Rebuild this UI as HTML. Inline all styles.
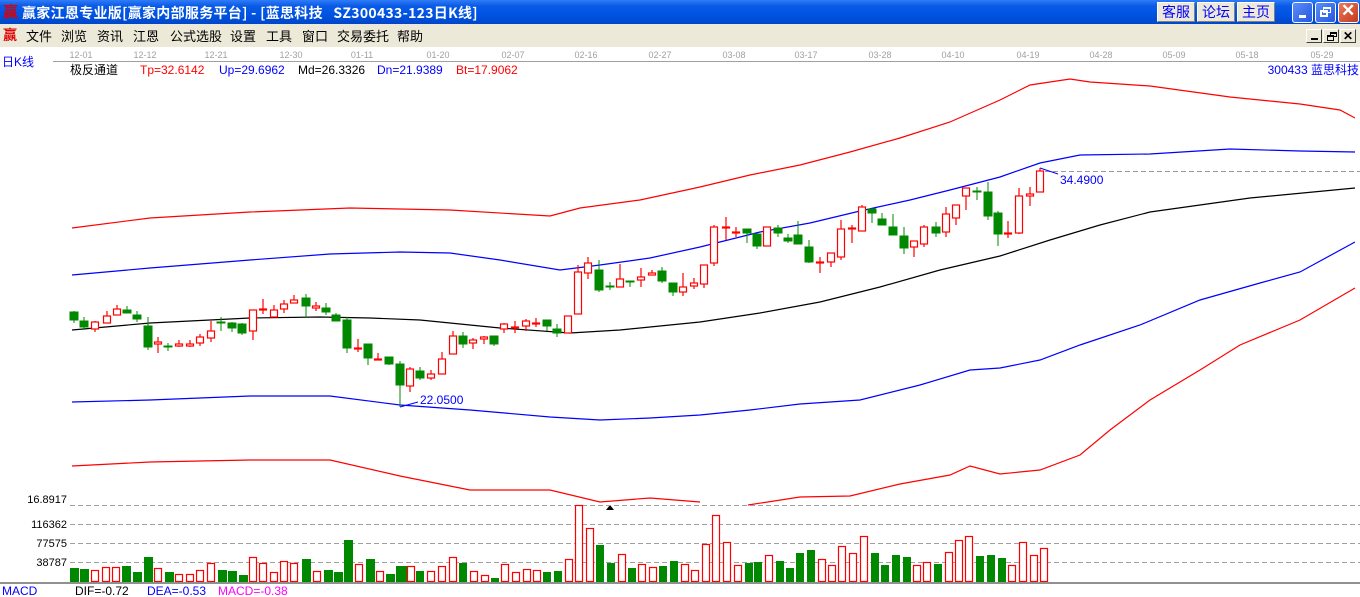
<!DOCTYPE html>
<html><head><meta charset="utf-8"><style>
*{margin:0;padding:0}
body{width:1360px;height:597px;overflow:hidden;background:#fff;font-family:"Liberation Sans","Noto Sans CJK SC",sans-serif;position:relative}
#tb{position:absolute;left:0;top:0;width:1360px;height:24px;background:linear-gradient(#2f7df7 0%,#0a5ae6 25%,#0054e3 60%,#0046c8 100%)}
#tt{position:absolute;left:22px;top:3px;color:#fff;font:bold 14px "Noto Sans CJK SC",sans-serif;letter-spacing:0.3px;white-space:pre}
.ico{position:absolute;color:#d00;font:bold 15px "Noto Sans CJK SC",sans-serif}
.tbtn{position:absolute;top:2px;height:20px;background:#ece9d8;border:1px solid #fff;border-right-color:#808080;border-bottom-color:#808080;color:#00f;font:14px "Noto Sans CJK SC",sans-serif;text-align:center;line-height:19px;box-sizing:border-box}
.wc{position:absolute;top:2px;width:21px;height:21px;border:1px solid #fff;border-radius:3px;box-sizing:border-box;background:linear-gradient(135deg,#5c8ef9,#2457e0)}
#mb{position:absolute;left:0;top:24px;width:1360px;height:23px;background:#ece9d8}
.mi{position:absolute;top:27px;font:13px "Noto Sans CJK SC",sans-serif;color:#000;line-height:17px}
.md{position:absolute;top:29px;width:16px;height:14px;background:#ece9d8;border:1px solid #fff;border-right-color:#404040;border-bottom-color:#404040;box-sizing:border-box}
svg{position:absolute;left:0;top:0}
</style></head><body>
<div id="tb"></div>
<div class="ico" style="left:3px;top:1px">赢</div>
<div id="tt">赢家江恩专业版[赢家内部服务平台] - [蓝思科技   SZ300433-123日K线]</div>
<div class="tbtn" style="left:1157px;width:38px">客服</div>
<div class="tbtn" style="left:1197px;width:38px">论坛</div>
<div class="tbtn" style="left:1237px;width:38px">主页</div>
<div class="wc" style="left:1292px"><div style="position:absolute;left:6px;top:12px;width:7px;height:3px;background:#fff"></div></div>
<div class="wc" style="left:1315px"><div style="position:absolute;left:4px;top:7px;width:8px;height:7px;border:2px solid #fff;border-top-width:2px;box-sizing:border-box"></div><div style="position:absolute;left:7px;top:4px;width:8px;height:6px;border:1px solid #fff;border-top-width:2px;box-sizing:border-box"></div></div>
<div class="wc" style="left:1338px;background:linear-gradient(135deg,#e87a5c,#c4391d)"><div style="position:absolute;left:2px;top:-2px;color:#fff;font:bold 17px 'Liberation Sans',sans-serif">✕</div></div>
<div id="mb"></div>
<div class="ico" style="left:3px;top:27px;font-size:14px;line-height:17px">赢</div>
<div class="mi" style="left:26px">文件</div><div class="mi" style="left:61px">浏览</div><div class="mi" style="left:97px">资讯</div><div class="mi" style="left:133px">江恩</div><div class="mi" style="left:170px">公式选股</div><div class="mi" style="left:230px">设置</div><div class="mi" style="left:266px">工具</div><div class="mi" style="left:302px">窗口</div><div class="mi" style="left:337px">交易委托</div><div class="mi" style="left:397px">帮助</div>
<div class="md" style="left:1306px"><div style="position:absolute;left:4px;top:8px;width:7px;height:2px;background:#000"></div></div>
<div class="md" style="left:1323px"><div style="position:absolute;left:3px;top:5px;width:7px;height:6px;border:1px solid #000;border-top-width:2px;box-sizing:border-box"></div><div style="position:absolute;left:6px;top:2px;width:7px;height:5px;border:1px solid #000;border-top-width:2px;box-sizing:border-box"></div></div>
<div class="md" style="left:1340px;font:bold 12px 'Liberation Sans';text-align:center;line-height:12px">✕</div>

<svg width="1360" height="597" viewBox="0 0 1360 597" font-family="Liberation Sans, Noto Sans CJK SC, sans-serif">
<line x1="53" y1="61.5" x2="1360" y2="61.5" stroke="#a0a0a0"/>
<g fill="#a0a0a0" font-size="9" text-anchor="middle">
<text x="81" y="58">12-01</text><text x="145" y="58">12-12</text><text x="216" y="58">12-21</text><text x="291" y="58">12-30</text><text x="362" y="58">01-11</text><text x="438" y="58">01-20</text><text x="513" y="58">02-07</text><text x="586" y="58">02-16</text><text x="660" y="58">02-27</text><text x="734" y="58">03-08</text><text x="806" y="58">03-17</text><text x="880" y="58">03-28</text><text x="953" y="58">04-10</text><text x="1028" y="58">04-19</text><text x="1101" y="58">04-28</text><text x="1174" y="58">05-09</text><text x="1247" y="58">05-18</text><text x="1322" y="58">05-29</text>
</g>
<text x="2" y="66" fill="#00f" font-size="12">日K线</text>
<text x="70" y="74" fill="#000" font-size="12">极反通道</text>
<text x="140" y="74" fill="#f00" font-size="12">Tp=32.6142</text>
<text x="219" y="74" fill="#00f" font-size="12">Up=29.6962</text>
<text x="298" y="74" fill="#000" font-size="12">Md=26.3326</text>
<text x="377" y="74" fill="#00f" font-size="12">Dn=21.9389</text>
<text x="456" y="74" fill="#f00" font-size="12">Bt=17.9062</text>
<text x="1359" y="74" fill="#00f" font-size="12" text-anchor="end">300433 蓝思科技</text>

<g fill="none" stroke-width="1.2">
<polyline stroke="#f00" points="72,228 150,218 250,212 350,208 450,210 550,216 580,208 640,200 700,187 750,175 800,165 850,152 900,138 950,122 1000,100 1030,85 1070,79 1090,82 1150,86 1230,97 1300,104 1340,110 1355,118"/>
<polyline stroke="#00f" points="72,275 150,268 250,260 330,254 400,252 450,253 500,260 560,270 600,265 650,258 700,247 760,232 810,223 860,211 910,200 950,190 1000,177 1040,163 1080,155 1150,154 1230,149 1300,151 1355,152"/>
<polyline stroke="#000" points="72,330 150,323 250,318 320,317 370,318 420,320 500,328 570,333 620,330 700,322 760,313 820,302 880,287 940,270 1000,256 1050,240 1100,225 1150,212 1250,198 1355,188"/>
<polyline stroke="#00f" points="72,402 150,400 250,396 330,396 400,405 470,410 550,417 600,420 650,418 700,415 750,410 800,404 860,400 920,385 970,370 1000,368 1040,360 1080,345 1140,325 1200,300 1260,283 1300,272 1355,242"/>
<polyline stroke="#f00" points="72,466 150,462 250,460 330,460 400,476 470,490 550,490 600,502 650,498 700,502"/>
<polyline stroke="#f00" points="748,505 800,497 850,496 900,484 950,475 970,466 1000,474 1040,470 1080,455 1110,430 1150,400 1200,370 1240,345 1300,320 1355,288"/>
</g>
<line x1="1045" y1="171.5" x2="1360" y2="171.5" stroke="#999" stroke-dasharray="5,3"/>
<polyline points="1040,168 1058,174" stroke="#00f" fill="none"/>
<text x="1060" y="184" fill="#00f" font-size="12">34.4900</text>
<polyline points="400,407 418,402" stroke="#00f" fill="none"/>
<text x="420" y="404" fill="#00f" font-size="12">22.0500</text>

<g id="c">
<g stroke="#080" fill="#080">
<line x1="74" y1="311" x2="74" y2="323"/><rect x="70" y="312" width="8" height="8"/>
<line x1="84" y1="317" x2="84" y2="330"/><rect x="80" y="321" width="8" height="6"/>
<line x1="127" y1="306" x2="127" y2="313"/><rect x="123" y="310" width="8" height="3"/>
<line x1="137" y1="311" x2="137" y2="322"/><rect x="133" y="315" width="8" height="4"/>
<line x1="148" y1="317" x2="148" y2="350"/><rect x="144" y="326" width="8" height="21"/>
<line x1="168" y1="343" x2="168" y2="351"/><rect x="164" y="346" width="8" height="1"/>
<line x1="221" y1="317" x2="221" y2="331"/><rect x="217" y="322" width="8" height="1"/>
<line x1="232" y1="322" x2="232" y2="332"/><rect x="228" y="323" width="8" height="5"/>
<line x1="242" y1="323" x2="242" y2="335"/><rect x="238" y="324" width="8" height="9"/>
<line x1="306" y1="294" x2="306" y2="318"/><rect x="302" y="298" width="8" height="8"/>
<line x1="326" y1="303" x2="326" y2="315"/><rect x="322" y="308" width="8" height="4"/>
<line x1="336" y1="313" x2="336" y2="321"/><rect x="332" y="315" width="8" height="6"/>
<line x1="347" y1="317" x2="347" y2="353"/><rect x="343" y="320" width="8" height="28"/>
<line x1="368" y1="344" x2="368" y2="365"/><rect x="364" y="344" width="8" height="14"/>
<line x1="389" y1="357" x2="389" y2="365"/><rect x="385" y="357" width="8" height="7"/>
<line x1="400" y1="361" x2="400" y2="407"/><rect x="396" y="364" width="8" height="21"/>
<line x1="420" y1="367" x2="420" y2="380"/><rect x="416" y="371" width="8" height="7"/>
<line x1="463" y1="332" x2="463" y2="348"/><rect x="459" y="336" width="8" height="8"/>
<line x1="494" y1="336" x2="494" y2="346"/><rect x="490" y="336" width="8" height="8"/>
<line x1="547" y1="320" x2="547" y2="331"/><rect x="543" y="320" width="8" height="6"/>
<line x1="557" y1="324" x2="557" y2="337"/><rect x="553" y="329" width="8" height="4"/>
<line x1="599" y1="260" x2="599" y2="292"/><rect x="595" y="270" width="8" height="20"/>
<line x1="610" y1="282" x2="610" y2="290"/><rect x="606" y="286" width="8" height="1"/>
<line x1="630" y1="281" x2="630" y2="287"/><rect x="626" y="281" width="8" height="1"/>
<line x1="662" y1="267" x2="662" y2="283"/><rect x="658" y="271" width="8" height="10"/>
<line x1="673" y1="283" x2="673" y2="296"/><rect x="669" y="283" width="8" height="9"/>
<line x1="747" y1="229" x2="747" y2="243"/><rect x="743" y="229" width="8" height="4"/>
<line x1="757" y1="234" x2="757" y2="249"/><rect x="753" y="234" width="8" height="12"/>
<line x1="778" y1="225" x2="778" y2="237"/><rect x="774" y="228" width="8" height="5"/>
<line x1="788" y1="234" x2="788" y2="243"/><rect x="784" y="238" width="8" height="3"/>
<line x1="798" y1="221" x2="798" y2="244"/><rect x="794" y="235" width="8" height="9"/>
<line x1="809" y1="240" x2="809" y2="263"/><rect x="805" y="247" width="8" height="15"/>
<line x1="872" y1="209" x2="872" y2="223"/><rect x="868" y="209" width="8" height="4"/>
<line x1="882" y1="213" x2="882" y2="225"/><rect x="878" y="219" width="8" height="6"/>
<line x1="893" y1="214" x2="893" y2="235"/><rect x="889" y="227" width="8" height="8"/>
<line x1="904" y1="227" x2="904" y2="254"/><rect x="900" y="236" width="8" height="12"/>
<line x1="936" y1="222" x2="936" y2="237"/><rect x="932" y="227" width="8" height="6"/>
<line x1="977" y1="187" x2="977" y2="200"/><rect x="973" y="191" width="8" height="1"/>
<line x1="988" y1="182" x2="988" y2="220"/><rect x="984" y="192" width="8" height="24"/>
<line x1="998" y1="211" x2="998" y2="246"/><rect x="994" y="213" width="8" height="21"/>
</g>
<g stroke="#f00" fill="#fff" stroke-width="1.2">
<line x1="95" y1="321" x2="95" y2="332"/><rect x="91.5" y="322" width="7" height="7"/>
<line x1="107" y1="311" x2="107" y2="323"/><rect x="103.5" y="316" width="7" height="7"/>
<line x1="117" y1="305" x2="117" y2="315"/><rect x="113.5" y="309" width="7" height="6"/>
<line x1="158" y1="337" x2="158" y2="353"/><rect x="154.5" y="342" width="7" height="2"/>
<line x1="179" y1="340" x2="179" y2="347"/><rect x="175.5" y="344" width="7" height="2"/>
<line x1="190" y1="340" x2="190" y2="347"/><rect x="186.5" y="344" width="7" height="2"/>
<line x1="200" y1="334" x2="200" y2="346"/><rect x="196.5" y="337" width="7" height="6"/>
<line x1="211" y1="321" x2="211" y2="342"/><rect x="207.5" y="331" width="7" height="7"/>
<line x1="253" y1="310" x2="253" y2="340"/><rect x="249.5" y="310" width="7" height="21"/>
<line x1="263" y1="299" x2="263" y2="314"/><rect x="259.5" y="309" width="7" height="1"/>
<line x1="274" y1="305" x2="274" y2="317"/><rect x="270.5" y="310" width="7" height="7"/>
<line x1="284" y1="300" x2="284" y2="313"/><rect x="280.5" y="304" width="7" height="5"/>
<line x1="294" y1="295" x2="294" y2="303"/><rect x="290.5" y="300" width="7" height="3"/>
<line x1="316" y1="302" x2="316" y2="311"/><rect x="312.5" y="306" width="7" height="2"/>
<line x1="358" y1="339" x2="358" y2="352"/><rect x="354.5" y="348" width="7" height="1"/>
<line x1="378" y1="353" x2="378" y2="360"/><rect x="374.5" y="359" width="7" height="1"/>
<line x1="410" y1="367" x2="410" y2="392"/><rect x="406.5" y="369" width="7" height="17"/>
<line x1="431" y1="370" x2="431" y2="380"/><rect x="427.5" y="374" width="7" height="4"/>
<line x1="442" y1="352" x2="442" y2="374"/><rect x="438.5" y="359" width="7" height="15"/>
<line x1="453" y1="331" x2="453" y2="354"/><rect x="449.5" y="336" width="7" height="18"/>
<line x1="473" y1="338" x2="473" y2="349"/><rect x="469.5" y="340" width="7" height="3"/>
<line x1="484" y1="336" x2="484" y2="344"/><rect x="480.5" y="337" width="7" height="2"/>
<line x1="504" y1="323" x2="504" y2="333"/><rect x="500.5" y="324" width="7" height="5"/>
<line x1="515" y1="321" x2="515" y2="333"/><rect x="511.5" y="327" width="7" height="1"/>
<line x1="526" y1="319" x2="526" y2="331"/><rect x="522.5" y="321" width="7" height="5"/>
<line x1="536" y1="318" x2="536" y2="327"/><rect x="532.5" y="323" width="7" height="1"/>
<line x1="568" y1="316" x2="568" y2="333"/><rect x="564.5" y="316" width="7" height="17"/>
<line x1="578" y1="265" x2="578" y2="314"/><rect x="574.5" y="272" width="7" height="42"/>
<line x1="588" y1="257" x2="588" y2="279"/><rect x="584.5" y="263" width="7" height="10"/>
<line x1="620" y1="264" x2="620" y2="287"/><rect x="616.5" y="279" width="7" height="8"/>
<line x1="641" y1="268" x2="641" y2="287"/><rect x="637.5" y="277" width="7" height="3"/>
<line x1="652" y1="270" x2="652" y2="275"/><rect x="648.5" y="273" width="7" height="2"/>
<line x1="683" y1="273" x2="683" y2="296"/><rect x="679.5" y="287" width="7" height="5"/>
<line x1="694" y1="278" x2="694" y2="289"/><rect x="690.5" y="283" width="7" height="3"/>
<line x1="704" y1="265" x2="704" y2="288"/><rect x="700.5" y="265" width="7" height="19"/>
<line x1="714" y1="225" x2="714" y2="266"/><rect x="710.5" y="227" width="7" height="36"/>
<line x1="726" y1="217" x2="726" y2="240"/><rect x="722.5" y="227" width="7" height="1"/>
<line x1="736" y1="227" x2="736" y2="237"/><rect x="732.5" y="232" width="7" height="1"/>
<line x1="767" y1="227" x2="767" y2="246"/><rect x="763.5" y="227" width="7" height="19"/>
<line x1="820" y1="257" x2="820" y2="273"/><rect x="816.5" y="262" width="7" height="1"/>
<line x1="831" y1="253" x2="831" y2="267"/><rect x="827.5" y="253" width="7" height="9"/>
<line x1="841" y1="220" x2="841" y2="260"/><rect x="837.5" y="229" width="7" height="28"/>
<line x1="852" y1="225" x2="852" y2="243"/><rect x="848.5" y="228" width="7" height="1"/>
<line x1="862" y1="205" x2="862" y2="231"/><rect x="858.5" y="207" width="7" height="24"/>
<line x1="914" y1="241" x2="914" y2="257"/><rect x="910.5" y="241" width="7" height="6"/>
<line x1="924" y1="225" x2="924" y2="247"/><rect x="920.5" y="227" width="7" height="17"/>
<line x1="946" y1="207" x2="946" y2="237"/><rect x="942.5" y="214" width="7" height="18"/>
<line x1="956" y1="205" x2="956" y2="225"/><rect x="952.5" y="205" width="7" height="13"/>
<line x1="966" y1="188" x2="966" y2="210"/><rect x="962.5" y="188" width="7" height="8"/>
<line x1="1008" y1="221" x2="1008" y2="238"/><rect x="1004.5" y="233" width="7" height="1"/>
<line x1="1019" y1="188" x2="1019" y2="234"/><rect x="1015.5" y="196" width="7" height="37"/>
<line x1="1030" y1="187" x2="1030" y2="206"/><rect x="1026.5" y="194" width="7" height="2"/>
<line x1="1040" y1="168" x2="1040" y2="192"/><rect x="1036.5" y="171" width="7" height="21"/>
</g>
</g>

<path d="M606,510 L610,505 L614,510 Z" fill="#000"/>
<g stroke="#a0a0a0" stroke-dasharray="5,3">
<line x1="70" y1="505.5" x2="1360" y2="505.5"/><line x1="70" y1="524.5" x2="1360" y2="524.5"/><line x1="70" y1="543.5" x2="1360" y2="543.5"/><line x1="70" y1="562.5" x2="1360" y2="562.5"/>
</g>
<g font-size="11" fill="#000" text-anchor="end">
<text x="67" y="503">16.8917</text><text x="67" y="528">116362</text><text x="67" y="547">77575</text><text x="67" y="566">38787</text>
</g>
<g fill="#080">
<rect x="70" y="568" width="9" height="14"/><rect x="80" y="569" width="9" height="13"/><rect x="122" y="566" width="9" height="16"/><rect x="133" y="572" width="9" height="10"/><rect x="144" y="557" width="9" height="25"/><rect x="165" y="572" width="9" height="10"/><rect x="218" y="570" width="9" height="12"/><rect x="228" y="571" width="9" height="11"/><rect x="239" y="575" width="9" height="7"/><rect x="302" y="559" width="9" height="23"/><rect x="324" y="570" width="9" height="12"/><rect x="334" y="572" width="9" height="10"/><rect x="344" y="540" width="9" height="42"/><rect x="366" y="559" width="9" height="23"/><rect x="386" y="574" width="9" height="8"/><rect x="396" y="566" width="9" height="16"/>
<rect x="400" y="566" width="8" height="16"/><rect x="416" y="571" width="8" height="11"/><rect x="459" y="563" width="8" height="19"/><rect x="491" y="578" width="8" height="4"/><rect x="543" y="572" width="8" height="10"/><rect x="554" y="571" width="8" height="11"/><rect x="596" y="545" width="8" height="37"/><rect x="607" y="563" width="8" height="19"/><rect x="628" y="568" width="8" height="14"/><rect x="659" y="566" width="8" height="16"/><rect x="670" y="561" width="8" height="21"/><rect x="745" y="563" width="8" height="19"/><rect x="754" y="562" width="8" height="20"/><rect x="776" y="561" width="8" height="21"/><rect x="786" y="568" width="8" height="14"/><rect x="796" y="553" width="8" height="29"/><rect x="807" y="550" width="8" height="32"/><rect x="871" y="553" width="8" height="29"/><rect x="881" y="565" width="8" height="17"/><rect x="892" y="555" width="8" height="27"/><rect x="903" y="557" width="8" height="25"/><rect x="934" y="564" width="8" height="18"/><rect x="976" y="556" width="8" height="26"/><rect x="987" y="555" width="8" height="27"/><rect x="998" y="558" width="8" height="24"/>
</g>
<g fill="#fff" stroke="#f00" stroke-width="1.2">
<rect x="91.5" y="570.5" width="7" height="11"/><rect x="102.5" y="567.5" width="7" height="14"/><rect x="112.5" y="567.5" width="7" height="14"/><rect x="154.5" y="568.5" width="7" height="13"/><rect x="175.5" y="574.5" width="7" height="7"/><rect x="186.5" y="574.5" width="7" height="7"/><rect x="196.5" y="570.5" width="7" height="11"/><rect x="207.5" y="563.5" width="7" height="18"/><rect x="249.5" y="557.5" width="7" height="24"/><rect x="259.5" y="563.5" width="7" height="18"/><rect x="270.5" y="572.5" width="7" height="9"/><rect x="280.5" y="561.5" width="7" height="20"/><rect x="290.5" y="563.5" width="7" height="18"/><rect x="313.5" y="571.5" width="7" height="10"/><rect x="355.5" y="564.5" width="7" height="17"/><rect x="376.5" y="571.5" width="7" height="10"/>
<rect x="407.5" y="566.5" width="7" height="15"/><rect x="427.5" y="571.5" width="7" height="10"/><rect x="438.5" y="566.5" width="7" height="15"/><rect x="449.5" y="557.5" width="7" height="24"/><rect x="470.5" y="571.5" width="7" height="10"/><rect x="481.5" y="575.5" width="7" height="6"/><rect x="501.5" y="564.5" width="7" height="17"/><rect x="512.5" y="572.5" width="7" height="9"/><rect x="523.5" y="569.5" width="7" height="12"/><rect x="533.5" y="570.5" width="7" height="11"/><rect x="565.5" y="559.5" width="7" height="22"/><rect x="575.5" y="505.5" width="7" height="76"/><rect x="586.5" y="528.5" width="7" height="53"/><rect x="618.5" y="554.5" width="7" height="27"/><rect x="638.5" y="564.5" width="7" height="17"/><rect x="649.5" y="567.5" width="7" height="14"/><rect x="681.5" y="564.5" width="7" height="17"/><rect x="691.5" y="570.5" width="7" height="11"/><rect x="702.5" y="544.5" width="7" height="37"/><rect x="712.5" y="515.5" width="7" height="66"/><rect x="723.5" y="542.5" width="7" height="39"/><rect x="734.5" y="565.5" width="7" height="16"/><rect x="765.5" y="555.5" width="7" height="26"/><rect x="818.5" y="559.5" width="7" height="22"/><rect x="828.5" y="565.5" width="7" height="16"/><rect x="838.5" y="546.5" width="7" height="35"/><rect x="849.5" y="553.5" width="7" height="28"/><rect x="860.5" y="536.5" width="7" height="45"/><rect x="913.5" y="565.5" width="7" height="16"/><rect x="923.5" y="562.5" width="7" height="19"/><rect x="945.5" y="552.5" width="7" height="29"/><rect x="955.5" y="540.5" width="7" height="41"/><rect x="965.5" y="536.5" width="7" height="45"/><rect x="1008.5" y="565.5" width="7" height="16"/><rect x="1019.5" y="542.5" width="7" height="39"/><rect x="1030.5" y="555.5" width="7" height="26"/><rect x="1040.5" y="548.5" width="7" height="33"/>
</g>
<rect x="0" y="582" width="1360" height="2" fill="#909090"/>
<text x="2" y="595" fill="#00f" font-size="12">MACD</text>
<text x="75" y="595" fill="#000" font-size="12">DIF=-0.72</text>
<text x="147" y="595" fill="#00f" font-size="12">DEA=-0.53</text>
<text x="218" y="595" fill="#f0f" font-size="12">MACD=-0.38</text>
</svg>
</body></html>
